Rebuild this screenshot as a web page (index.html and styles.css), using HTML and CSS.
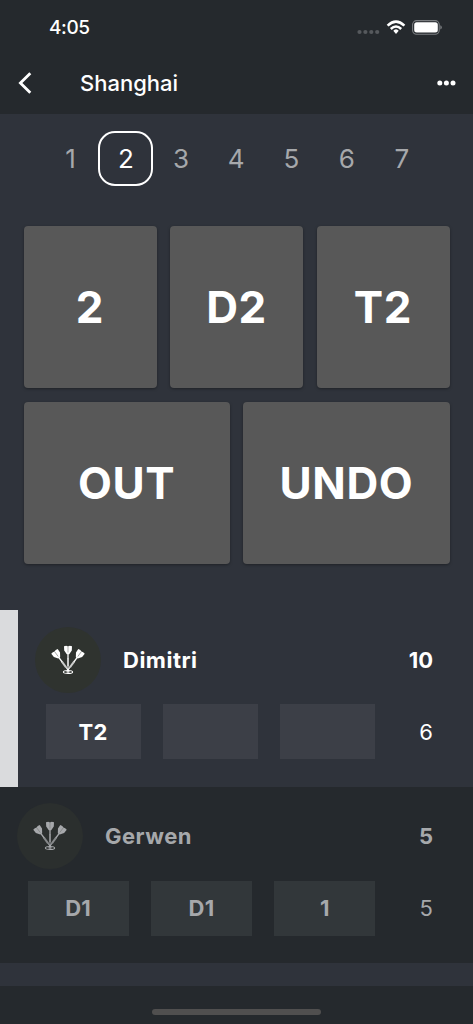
FILE: index.html
```
<!DOCTYPE html>
<html lang="en">
<head>
    <meta charset="UTF-8">
    <meta name="viewport" content="width=device-width, initial-scale=1.0">
    <link rel="stylesheet" href="styles.css">
    <title>Shanghai</title>
</head>
<body>
    <!-- Dart icon shared by the avatars -->
    <svg class="sprite" aria-hidden="true">
        <symbol id="darts" viewBox="0 0 34 30">
            <g id="dart">
                <path d="M13 1.2L15.2 .8L17 1.4L18.8 .8L21 1.2L20.8 5.4L18.2 9.2H15.8L13.2 5.4Z" fill="currentColor"/>
                <path d="M17 2V7.5" stroke="#777a76" stroke-width=".6"/>
                <path d="M17 8.5V14" stroke="currentColor" stroke-width="1.3"/>
                <path d="M17 13.5V21" stroke="currentColor" stroke-width="2" opacity=".75"/>
                <path d="M17 21V26" stroke="currentColor" stroke-width="1"/>
            </g>
            <use href="#dart" transform="rotate(-36 17 25) translate(0 .8)"/>
            <use href="#dart" transform="rotate(36 17 25) translate(0 .8)"/>
            <ellipse cx="17" cy="27" rx="4.6" ry="1.5" fill="none" stroke="currentColor" stroke-width="1.1"/>
            <ellipse cx="17" cy="27" rx="1.8" ry=".7" fill="currentColor"/>
        </symbol>
    </svg>

    <header>
        <div class="status">
            <span class="time">4:05</span>
            <div class="status-icons">
                <svg width="23" height="6" viewBox="0 0 23 6" fill="#56595d">
                    <circle cx="2.5" cy="3" r="2.1"/>
                    <circle cx="8.4" cy="3" r="2.1"/>
                    <circle cx="14.3" cy="3" r="2.1"/>
                    <circle cx="20.2" cy="3" r="2.1"/>
                </svg>
                <svg class="wifi" width="20" height="15" viewBox="0 0 20 15" fill="none" stroke="#fff" stroke-width="2.6">
                    <path d="M1.6 5.6Q10 -2.3 18.4 5.6"/>
                    <path d="M4.8 9Q10 4 15.2 9"/>
                    <path d="M10 9.2Q11.6 9.2 12.7 10.7L10 13.9L7.3 10.7Q8.4 9.2 10 9.2Z" fill="#fff" stroke="none"/>
                </svg>
                <svg class="battery" width="30" height="15" viewBox="0 0 30 15">
                    <rect x=".6" y=".6" width="26.6" height="13.6" rx="4" fill="none" stroke="#7b7e81" stroke-width="1.1"/>
                    <rect x="2.2" y="2.2" width="23.6" height="10.4" rx="2.5" fill="#fff"/>
                    <path d="M28.3 5.2Q29.8 5.8 29.8 7.4Q29.8 9 28.3 9.6Z" fill="#7b7e81"/>
                </svg>
            </div>
        </div>
        <nav class="topbar">
            <svg class="back" width="14" height="22" viewBox="0 0 14 22" fill="none" stroke="#fff" stroke-width="2.8">
                <path d="M12.3 1.2L2.4 11L12.3 20.8"/>
            </svg>
            <h1>Shanghai</h1>
            <svg class="more" width="19" height="6" viewBox="0 0 19 6" fill="#fff">
                <circle cx="2.8" cy="3" r="2.5"/>
                <circle cx="9.4" cy="3" r="2.5"/>
                <circle cx="16" cy="3" r="2.5"/>
            </svg>
        </nav>
    </header>

    <main>
        <div class="rounds">
            <span>1</span>
            <span class="current">2</span>
            <span>3</span>
            <span>4</span>
            <span>5</span>
            <span>6</span>
            <span>7</span>
        </div>

        <div class="keypad">
            <div class="row">
                <button type="button">2</button>
                <button type="button">D2</button>
                <button type="button">T2</button>
            </div>
            <div class="row">
                <button type="button">OUT</button>
                <button type="button">UNDO</button>
            </div>
        </div>

        <section class="player active">
            <div class="info">
                <div class="avatar"><svg width="34" height="30"><use href="#darts"/></svg></div>
                <h2>Dimitri</h2>
                <strong class="total">10</strong>
            </div>
            <div class="throws">
                <div class="throw">T2</div>
                <div class="throw"></div>
                <div class="throw"></div>
                <span class="points">6</span>
            </div>
        </section>

        <section class="player waiting">
            <div class="info">
                <div class="avatar"><svg width="34" height="30"><use href="#darts"/></svg></div>
                <h2>Gerwen</h2>
                <strong class="total">5</strong>
            </div>
            <div class="throws">
                <div class="throw">D1</div>
                <div class="throw">D1</div>
                <div class="throw">1</div>
                <span class="points">5</span>
            </div>
        </section>
    </main>

    <footer>
        <div class="home-bar"></div>
    </footer>
</body>
</html>
```
FILE: styles.css
```
* {
    box-sizing: border-box;
}

body {
    margin: 0;
    height: 1024px;
    display: flex;
    flex-direction: column;
    overflow: hidden;
    font-family: 'Inter', 'Liberation Sans', sans-serif;
    background: #2f333b;
    color: #fff;
}

h1, h2 {
    margin: 0;
}

.sprite {
    display: none;
}

header {
    height: 114px;
    background: #25292d;
}

.status {
    height: 54px;
    padding: 0 31px 0 49px;
    display: flex;
    justify-content: space-between;
    align-items: center;
}

.time {
    font-size: 19px;
    font-weight: 550;
    letter-spacing: -0.4px;
}

.status-icons {
    display: flex;
    align-items: center;
}

.status-icons svg:first-child {
    margin-top: 10px;
}

.wifi {
    margin-left: 6px;
}

.battery {
    margin-left: 6px;
}

.topbar {
    height: 58px;
    padding: 0 17px 0 18px;
    display: flex;
    align-items: center;
}

.topbar h1 {
    margin-left: 48px;
    font-size: 22px;
    font-weight: 500;
}

.more {
    margin-left: auto;
}

/* Rounds */
.rounds {
    height: 111.5px;
    padding: 16.5px 43.5px 0 43px;
    display: flex;
}

.rounds span {
    flex: 1 1 0;
    height: 55.5px;
    display: flex;
    align-items: center;
    justify-content: center;
    font-size: 26px;
    color: #a6a8ab;
}

.rounds .current {
    color: #fff;
    border-radius: 17px;
    box-shadow: inset 0 0 0 2px #fff;
}

/* Buttons */
.keypad {
    padding: 0 23.5px;
    height: 384.5px;
    display: flex;
    flex-direction: column;
    gap: 13.5px;
}

.row {
    display: flex;
    gap: 13.5px;
}

.row button {
    flex: 1 1 0;
    min-width: 0;
    height: 162.5px;
    padding: 0;
    border: none;
    border-radius: 4px;
    background: #585858;
    box-shadow: 0 1px 3px rgba(0, 0, 0, 0.35);
    color: #fff;
    font-family: inherit;
    font-size: 44px;
    font-weight: 650;
    letter-spacing: 0.6px;
}

/* Players */
.player {
    height: 176.7px;
    padding: 16.5px 40px 0 0;
    font-size: 22px;
}

.active {
    border-left: 18px solid #dadbdd;
}

.waiting {
    background: #25292d;
}

.info {
    height: 66px;
    padding-left: 16.5px;
    display: flex;
    align-items: center;
}

.avatar {
    width: 66px;
    height: 66px;
    display: flex;
    align-items: center;
    justify-content: center;
    border-radius: 50%;
    background: #2f332f;
}

.info h2 {
    margin-left: 22.5px;
    font-size: 22px;
    font-weight: 650;
    letter-spacing: 0.5px;
}

.total {
    margin-left: auto;
}

.throws {
    margin-top: 11.5px;
    padding-left: 27.5px;
    display: flex;
    align-items: center;
    gap: 22px;
}

.throw {
    flex: 1;
    height: 55px;
    display: flex;
    align-items: center;
    justify-content: center;
    font-weight: 650;
    letter-spacing: 0.3px;
    background: #3c3f47;
}

.points {
    width: 35.5px;
    text-align: right;
}

.waiting .avatar {
    background: #2b2f2e;
}

.waiting .avatar svg,
.waiting h2,
.waiting .total,
.waiting .points,
.waiting .throw {
    color: #a6a8ab;
}

.waiting .throw {
    background: #32373a;
}

footer {
    height: 38px;
    margin-top: auto;
    padding-top: 23px;
    background: #25292d;
}

.home-bar {
    width: 169px;
    height: 6px;
    margin: 0 auto;
    border-radius: 3px;
    background: #504f4f;
}
```
